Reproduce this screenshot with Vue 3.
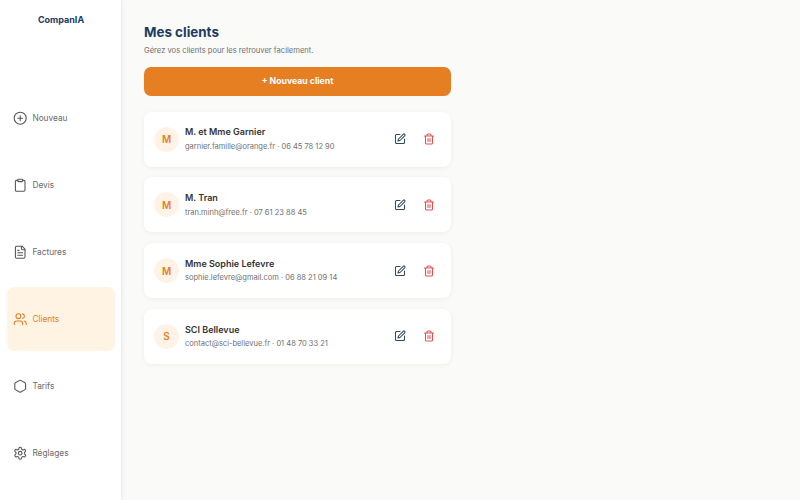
<script setup>
const nav = [
  { label: 'Nouveau', icon: 'plus' },
  { label: 'Devis', icon: 'clip' },
  { label: 'Factures', icon: 'file' },
  { label: 'Clients', icon: 'users', active: true },
  { label: 'Tarifs', icon: 'hex' },
  { label: 'Réglages', icon: 'gear' },
]
const clients = [
  { initial: 'M', name: 'M. et Mme Garnier', info: 'garnier.famille@orange.fr · 06 45 78 12 90' },
  { initial: 'M', name: 'M. Tran', info: 'tran.minh@free.fr · 07 61 23 88 45' },
  { initial: 'M', name: 'Mme Sophie Lefevre', info: 'sophie.lefevre@gmail.com · 06 88 21 09 14' },
  { initial: 'S', name: 'SCI Bellevue', info: 'contact@sci-bellevue.fr · 01 48 70 33 21' },
]
</script>

<template>
  <div class="app">
    <aside class="sidebar">
      <div class="logo">CompanIA</div>
      <nav class="nav">
        <div v-for="item in nav" :key="item.label" class="nav-item" :class="{ active: item.active }">
          <svg class="nav-icon" viewBox="0 0 24 24" fill="none" stroke="currentColor" stroke-width="2" stroke-linecap="round" stroke-linejoin="round">
            <template v-if="item.icon === 'plus'">
              <circle cx="12" cy="12" r="10" /><path d="M8 12h8M12 8v8" />
            </template>
            <template v-else-if="item.icon === 'clip'">
              <rect x="8" y="2" width="8" height="4" rx="1" /><path d="M16 4h2a2 2 0 0 1 2 2v14a2 2 0 0 1-2 2H6a2 2 0 0 1-2-2V6a2 2 0 0 1 2-2h2" />
            </template>
            <template v-else-if="item.icon === 'file'">
              <path d="M15 2H6a2 2 0 0 0-2 2v16a2 2 0 0 0 2 2h12a2 2 0 0 0 2-2V7Z" /><path d="M14 2v4a2 2 0 0 0 2 2h4M10 9H8M16 13H8M16 17H8" />
            </template>
            <template v-else-if="item.icon === 'users'">
              <path d="M16 21v-2a4 4 0 0 0-4-4H6a4 4 0 0 0-4 4v2" /><circle cx="9" cy="7" r="4" /><path d="M22 21v-2a4 4 0 0 0-3-3.87M16 3.13a4 4 0 0 1 0 7.75" />
            </template>
            <template v-else-if="item.icon === 'hex'">
              <path d="M21 16V8a2 2 0 0 0-1-1.73l-7-4a2 2 0 0 0-2 0l-7 4A2 2 0 0 0 3 8v8a2 2 0 0 0 1 1.73l7 4a2 2 0 0 0 2 0l7-4A2 2 0 0 0 21 16Z" />
            </template>
            <template v-else>
              <path d="M12.22 2h-.44a2 2 0 0 0-2 2v.18a2 2 0 0 1-1 1.73l-.43.25a2 2 0 0 1-2 0l-.15-.08a2 2 0 0 0-2.73.73l-.22.38a2 2 0 0 0 .73 2.73l.15.1a2 2 0 0 1 1 1.72v.51a2 2 0 0 1-1 1.74l-.15.09a2 2 0 0 0-.73 2.73l.22.38a2 2 0 0 0 2.73.73l.15-.08a2 2 0 0 1 2 0l.43.25a2 2 0 0 1 1 1.73V20a2 2 0 0 0 2 2h.44a2 2 0 0 0 2-2v-.18a2 2 0 0 1 1-1.73l.43-.25a2 2 0 0 1 2 0l.15.08a2 2 0 0 0 2.73-.73l.22-.39a2 2 0 0 0-.73-2.73l-.15-.08a2 2 0 0 1-1-1.74v-.5a2 2 0 0 1 1-1.74l.15-.09a2 2 0 0 0 .73-2.73l-.22-.38a2 2 0 0 0-2.73-.73l-.15.08a2 2 0 0 1-2 0l-.43-.25a2 2 0 0 1-1-1.73V4a2 2 0 0 0-2-2Z" /><circle cx="12" cy="12" r="3" />
            </template>
          </svg>
          <span>{{ item.label }}</span>
        </div>
      </nav>
    </aside>
    <main class="main">
      <h1 class="title">Mes clients</h1>
      <p class="subtitle">Gérez vos clients pour les retrouver facilement.</p>
      <button class="add">+ Nouveau client</button>
      <div class="list">
        <div v-for="c in clients" :key="c.name" class="card">
          <div class="avatar">{{ c.initial }}</div>
          <div class="text">
            <div class="name">{{ c.name }}</div>
            <div class="info">{{ c.info }}</div>
          </div>
          <div class="actions">
            <svg class="act edit" viewBox="0 0 24 24" fill="none" stroke="currentColor" stroke-linecap="round" stroke-linejoin="round">
              <path d="M12 3H5a2 2 0 0 0-2 2v14a2 2 0 0 0 2 2h14a2 2 0 0 0 2-2v-7" />
              <path d="M18.4 2.6a2.12 2.12 0 0 1 3 3L12 15l-4 1 1-4Z" />
            </svg>
            <svg class="act trash" viewBox="0 0 24 24" fill="none" stroke="currentColor" stroke-linecap="round" stroke-linejoin="round">
              <path d="M3 6h18M19 6v14a2 2 0 0 1-2 2H7a2 2 0 0 1-2-2V6M8 6V4a2 2 0 0 1 2-2h4a2 2 0 0 1 2 2v2M10 11v6M14 11v6" />
            </svg>
          </div>
        </div>
      </div>
    </main>
  </div>
</template>

<style>
html, body { margin: 0; }
</style>

<style scoped>
.app {
  display: flex;
  width: 800px;
  height: 500px;
  overflow: hidden;
  background: #fafaf8;
  font-family: "Inter", "Liberation Sans", sans-serif;
}
.sidebar {
  width: 122px;
  flex: none;
  box-sizing: border-box;
  background: #fff;
  border-right: 1px solid #f0efeb;
  box-shadow: 2px 0 4px rgba(0, 0, 0, 0.03);
  padding: 13px 6px 0 7px;
}
.logo {
  height: 13px;
  line-height: 13px;
  text-align: center;
  font-size: 9px;
  font-weight: 700;
  color: #1e3a5f;
}
.nav {
  display: flex;
  flex-direction: column;
  gap: 3.05px;
  margin-top: 60px;
}
.nav-item {
  height: 64px;
  display: flex;
  align-items: center;
  gap: 5px;
  padding-left: 6px;
  border-radius: 7px;
  font-size: 8.3px;
  color: #6a6a6a;
}
.nav-item span {
  margin-top: -1px;
}
.nav-item.active {
  background: #fff3e4;
  color: #e67e22;
}
.nav-icon {
  width: 14.4px;
  height: 14.4px;
  stroke-width: 1.8;
  color: #555;
}
.nav-item.active .nav-icon {
  color: #e67e22;
}
.main {
  flex: 1;
  padding: 24px 22px 0;
}
.title {
  margin: 0;
  font-size: 13.4px;
  line-height: 17px;
  font-weight: 700;
  color: #1e3a5f;
}
.subtitle {
  margin: 4px 0 0;
  font-size: 7.6px;
  line-height: 11px;
  color: #707070;
}
.add {
  display: block;
  width: 307px;
  height: 29px;
  margin-top: 11px;
  padding: 0 0 1px;
  border: 0;
  border-radius: 7px;
  background: #e67e22;
  color: #fff;
  font-family: inherit;
  font-size: 8.7px;
  font-weight: 700;
}
.list {
  width: 307px;
  display: flex;
  flex-direction: column;
  gap: 10.75px;
  margin-top: 15.5px;
}
.card {
  height: 55px;
  display: flex;
  align-items: center;
  box-sizing: border-box;
  padding: 0 16px 0 10px;
  background: #fff;
  border-radius: 8px;
  box-shadow: 0 1px 5px rgba(0, 0, 0, 0.06);
}
.avatar {
  width: 25px;
  height: 25px;
  flex: none;
  display: flex;
  align-items: center;
  justify-content: center;
  border-radius: 50%;
  background: #fef3e6;
  color: #e67e22;
  font-size: 10px;
  font-weight: 600;
}
.text {
  flex: 1;
  margin-left: 6px;
}
.name {
  font-size: 9px;
  line-height: 12px;
  font-weight: 600;
  color: #333;
}
.info {
  margin-top: 2.5px;
  font-size: 7.5px;
  line-height: 11px;
  color: #707070;
}
.actions {
  display: flex;
  gap: 17px;
}
.act {
  width: 12px;
  height: 12px;
  stroke-width: 2.1;
}
.edit { color: #34495e; }
.trash { color: #e05050; }
</style>
